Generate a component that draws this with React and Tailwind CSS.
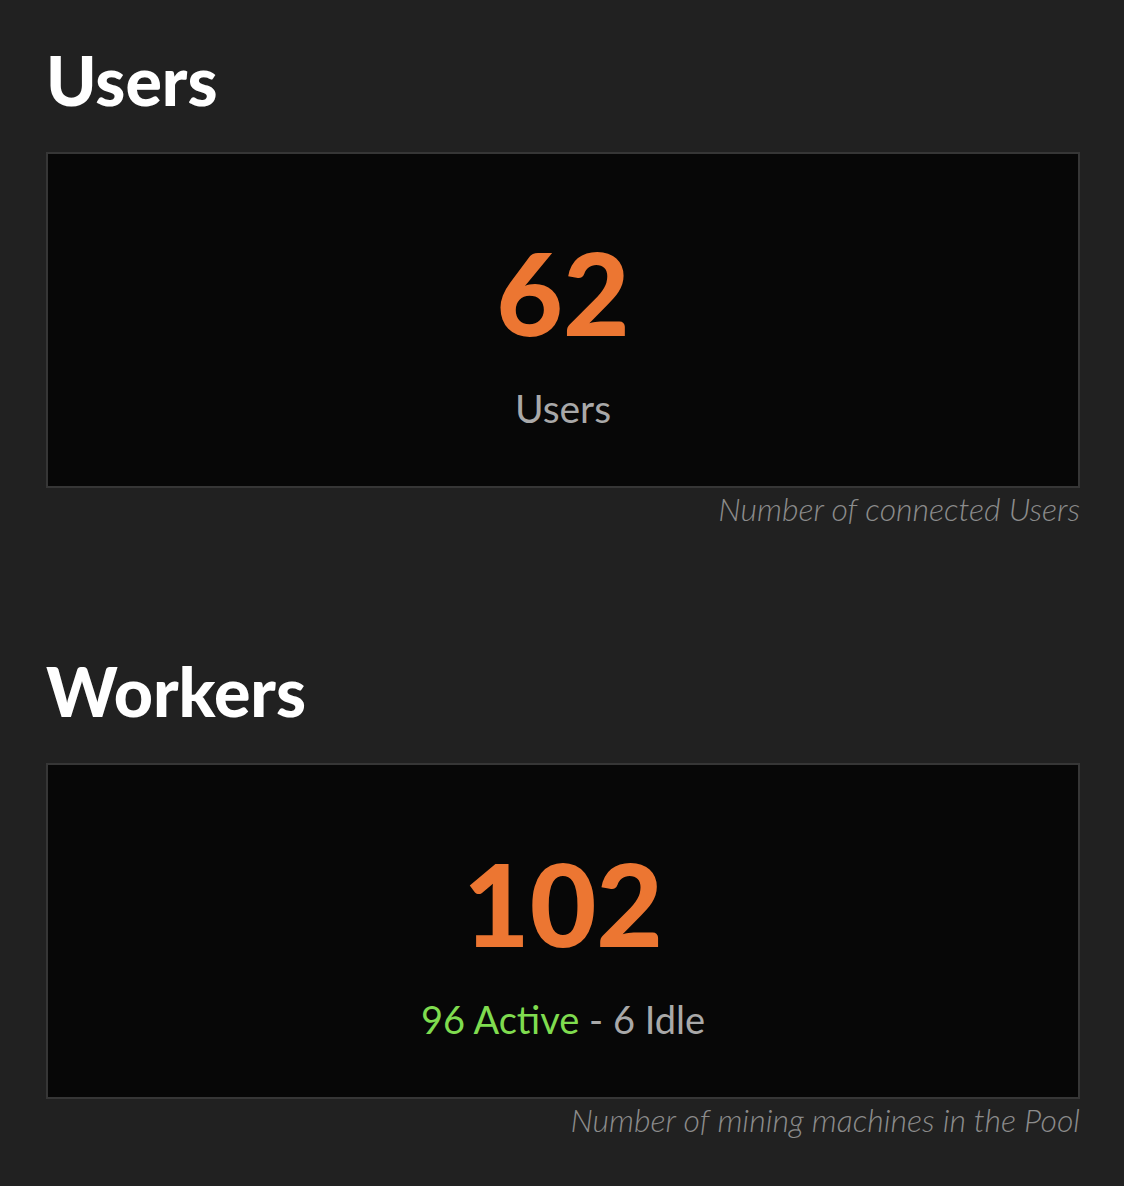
export default function App() {
  const font = { fontFamily: '"Source Sans Pro", Lato, "Noto Sans", sans-serif' };
  return (
    <div className="min-h-[1186px] w-full bg-[#212121] pt-[46px] pl-[46px] pr-[44px]" style={font}>
      <section>
        <h2 className="text-[68px] font-black leading-none text-white">Users</h2>
        <div className="mt-[38px] flex h-[336px] flex-col items-center border-2 border-[#363636] bg-[#070707] pt-[80px]">
          <div className="text-[115px] font-black leading-none text-[#ec7632]">62</div>
          <div className="mt-[40px] text-[39px] leading-none text-[#a9a9a9]">Users</div>
        </div>
        <p className="mt-[5px] text-right text-[32px] font-light italic leading-none text-[#8c8c8c]">
          Number of connected Users
        </p>
      </section>
      <section className="mt-[132px]">
        <h2 className="text-[68px] font-black leading-none text-white">Workers</h2>
        <div className="mt-[38px] flex h-[336px] flex-col items-center border-2 border-[#363636] bg-[#070707] pt-[80px]">
          <div className="text-[115px] font-black leading-none text-[#ec7632]">102</div>
          <div className="mt-[40px] text-[38px] leading-none">
            <span className="text-[#7fdc4f]">96 Active</span>
            <span className="text-[#a9a9a9]"> - 6 Idle</span>
          </div>
        </div>
        <p className="mt-[5px] text-right text-[32px] font-light italic leading-none text-[#8c8c8c]">
          Number of mining machines in the Pool
        </p>
      </section>
    </div>
  );
}
